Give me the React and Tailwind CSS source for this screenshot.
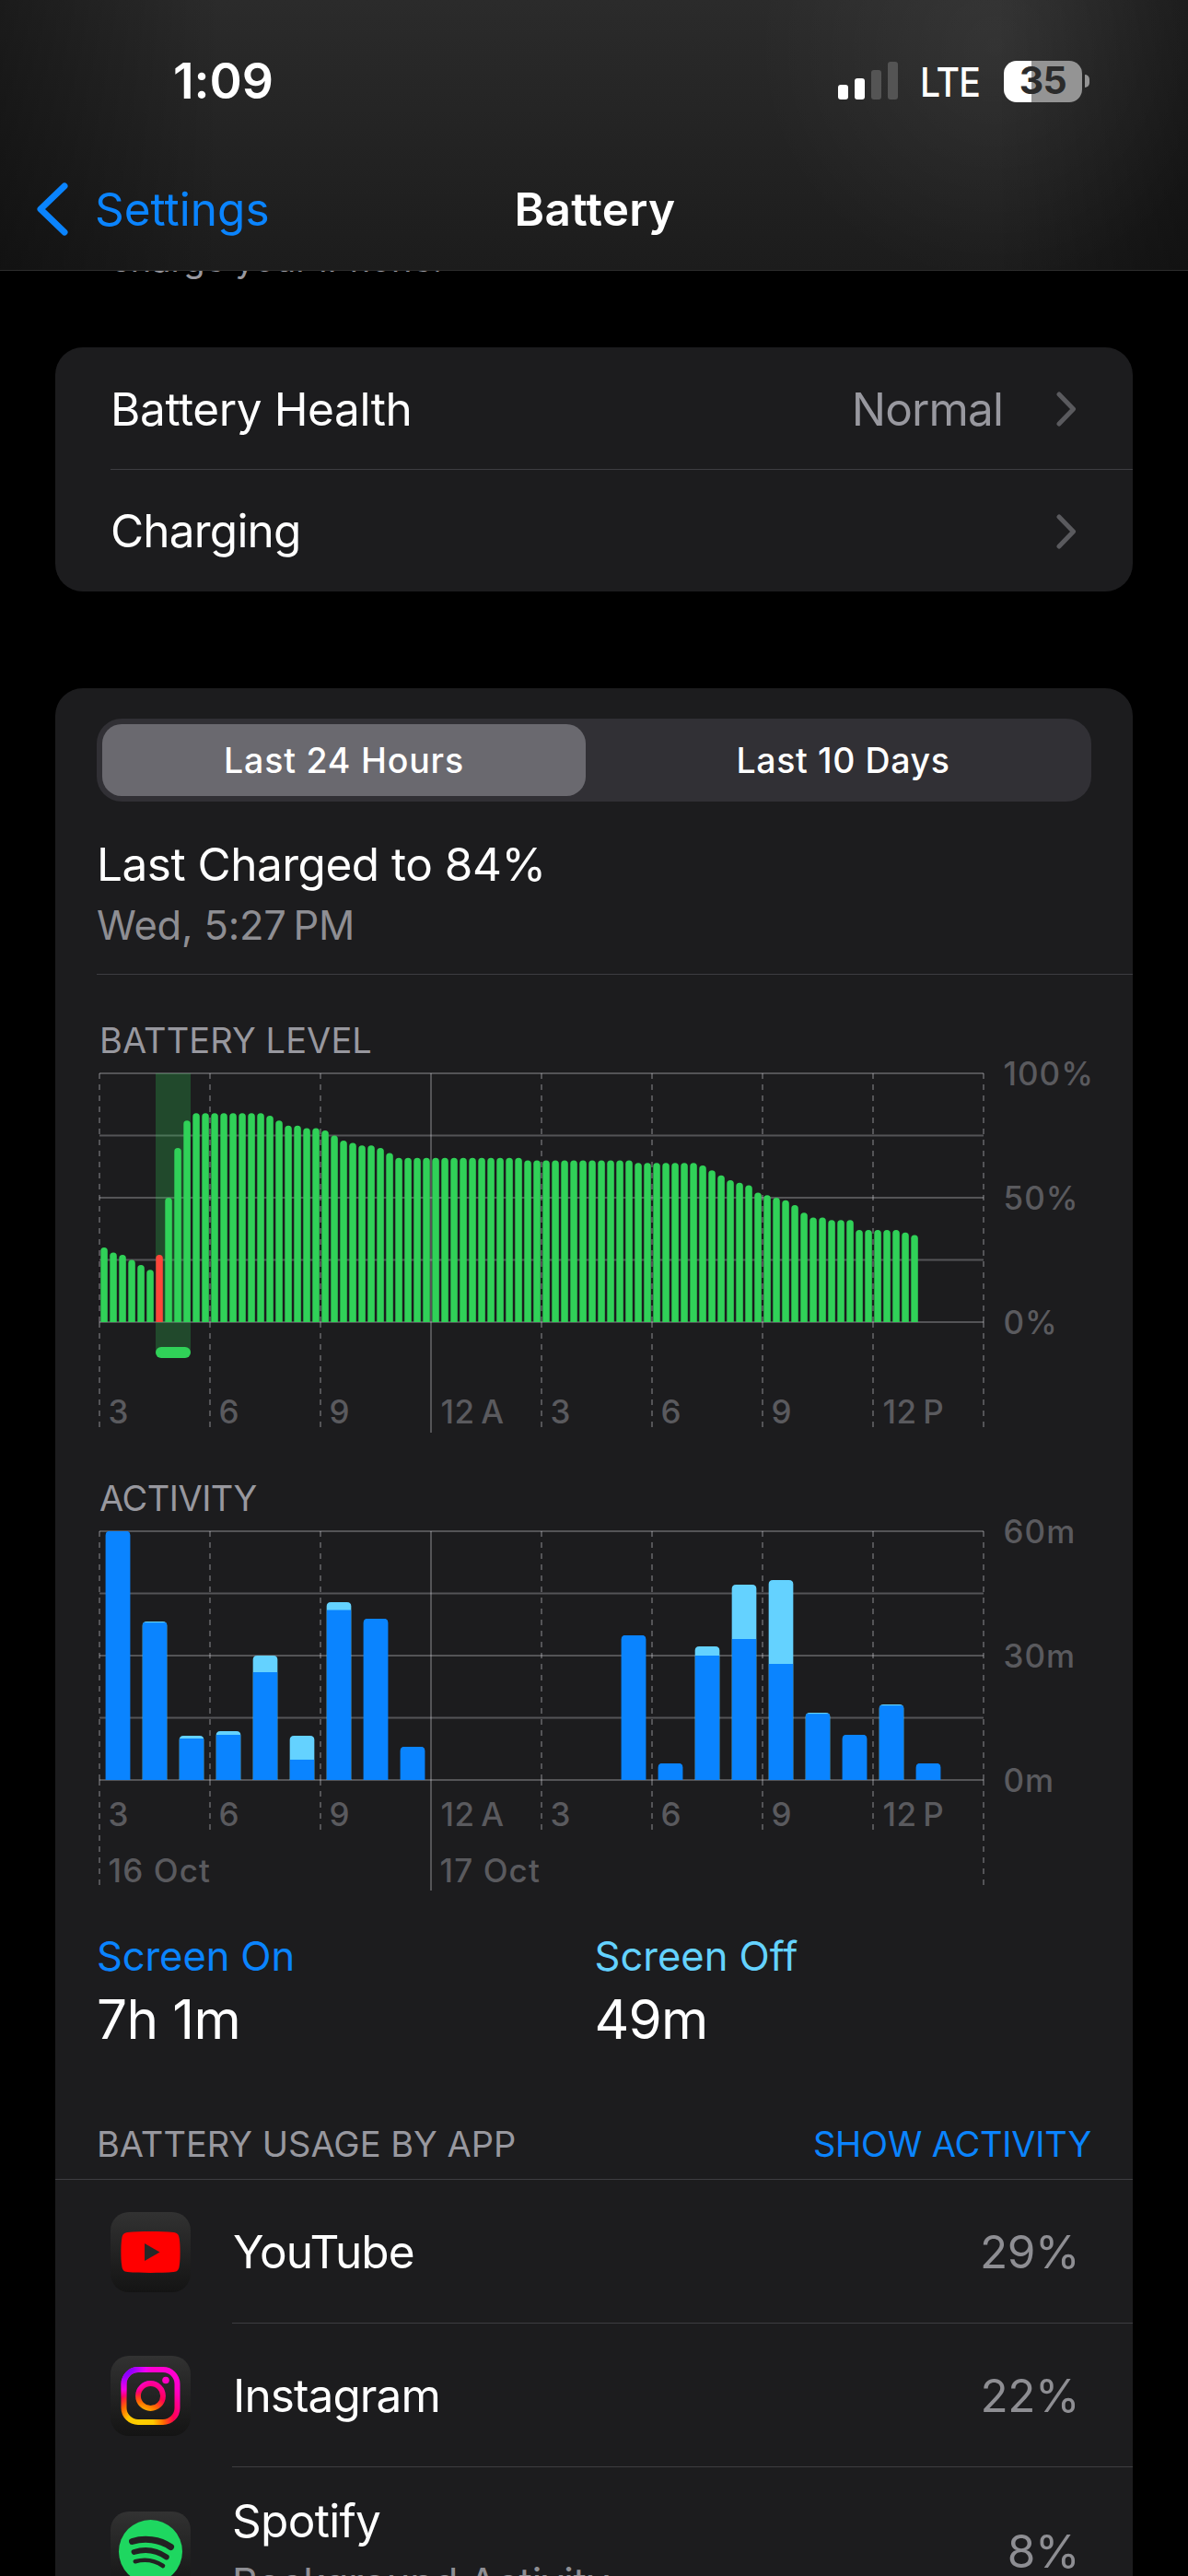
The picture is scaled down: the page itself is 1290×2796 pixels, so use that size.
import React from 'react';

// One bar per 15 minutes, starting at 3 PM
const batteryLevels = [
  30, 28, 27, 25, 23, 21, 27, 50, 70, 81,
  84, 84, 84, 84, 84, 84, 84, 84, 83, 81,
  79, 79, 78, 78, 77, 75, 73, 72, 71, 71,
  70, 68, 66, 66, 66, 66, 66, 66, 66, 66,
  66, 66, 66, 66, 66, 66, 65, 65, 65, 65,
  65, 65, 65, 65, 65, 65, 65, 65, 64, 64,
  64, 64, 64, 64, 64, 63, 61, 59, 57, 56,
  55, 52, 51, 50, 49, 47, 44, 42, 42, 41,
  41, 41, 37, 37, 37, 37, 37, 36, 35,
];
const LOW_BATTERY_INDEX = 6;

// Minutes per hour: total usage and the part with the screen on
const activity = [
  { hour: 0, total: 60, on: 60 },
  { hour: 1, total: 38.2, on: 37.97 },
  { hour: 2, total: 10.67, on: 10 },
  { hour: 3, total: 11.78, on: 10.89 },
  { hour: 4, total: 30, on: 26 },
  { hour: 5, total: 10.67, on: 4.9 },
  { hour: 6, total: 42.9, on: 41 },
  { hour: 7, total: 38.9, on: 38.9 },
  { hour: 8, total: 8, on: 8 },
  { hour: 14, total: 34.9, on: 34.9 },
  { hour: 15, total: 4, on: 4 },
  { hour: 16, total: 32.2, on: 30 },
  { hour: 17, total: 47.1, on: 34 },
  { hour: 18, total: 48.2, on: 28 },
  { hour: 19, total: 16.2, on: 15.97 },
  { hour: 20, total: 10.9, on: 10.9 },
  { hour: 21, total: 18.2, on: 17.97 },
  { hour: 22, total: 4, on: 4 },
];

const hourLabels = ['3', '6', '9', '12\u2009A', '3', '6', '9', '12\u2009P'];
const gridRows = [0, 67.5, 135, 202.5, 270];

function Chevron() {
  return (
    <svg width="22" height="38" viewBox="0 0 22 38" fill="none">
      <path d="M3 3L18.5 19L3 35" stroke="#5a5a5e" strokeWidth="5" strokeLinecap="round" strokeLinejoin="round" />
    </svg>
  );
}

function Grid({ lengths }) {
  return (
    <g stroke="#ebebf5" strokeOpacity="0.27" strokeWidth="2" fill="none">
      {gridRows.map((y) => (
        <line key={y} x1="0" x2="960" y1={y} y2={y} />
      ))}
      {/* The dash pattern restarts at the baseline */}
      {lengths.map((len, i) => (
        <path key={i} d={`M${i * 120} 0V270M${i * 120} 270V${len}`} strokeDasharray={i === 3 ? undefined : '6 6'} />
      ))}
    </g>
  );
}

function ChartLabels({ y, rows }) {
  return (
    <g fill="#5a5a5e" fontSize="35" fontWeight="500">
      {hourLabels.map((label, i) => (
        <text key={i} x={i * 120 + (label.length > 1 ? 10.5 : 9.5)} y={y} letterSpacing="0.5">{label}</text>
      ))}
      {rows.map((label, i) => (
        <text key={label} x="981.5" y={i * 135 + 13} letterSpacing="1">{label}</text>
      ))}
    </g>
  );
}

function BatteryLevelChart() {
  const lengths = [384, 384, 384, 390, 384, 384, 384, 384, 384];
  return (
    <svg className="block h-[400px] w-[1122px] overflow-visible" viewBox="0 0 1122 400">
      <Grid lengths={lengths} />
      <rect x="61" y="0" width="38" height="303" fill="#30d158" fillOpacity="0.25" />
      {batteryLevels.map((level, i) => {
        const x = i * 10 + 1.3;
        const top = 270 - level * 2.7;
        return (
          <path
            key={i}
            d={`M${x} 270V${top + 3.75}a3.75 3.75 0 0 1 7.5 0V270z`}
            fill={i === LOW_BATTERY_INDEX ? '#ff453a' : '#30d158'}
          />
        );
      })}
      <rect x="61" y="297" width="38" height="12" rx="6" fill="#30d158" />
      <ChartLabels y={380} rows={['100%', '50%', '0%']} />
    </svg>
  );
}

function ActivityChart() {
  const lengths = [384, 324, 324, 390, 324, 324, 324, 324, 384];
  return (
    <svg className="block h-[400px] w-[1122px] overflow-visible" viewBox="0 0 1122 400">
      <Grid lengths={lengths} />
      {activity.map(({ hour, total, on }) => {
        const x = hour * 40 + 6.67;
        const top = 270 - total * 4.5;
        const onTop = 270 - on * 4.5;
        const bar = `M${x} 270V${top + 4.5}q0 -4.5 4.5 -4.5h17.67q4.5 0 4.5 4.5V270z`;
        return (
          <g key={hour}>
            <clipPath id={`bar-${hour}`}>
              <path d={bar} />
            </clipPath>
            <path d={bar} fill={total > on ? '#64d2ff' : '#0a84ff'} />
            <rect x={x} y={onTop} width="26.67" height={270 - onTop} fill="#0a84ff" clipPath={`url(#bar-${hour})`} />
          </g>
        );
      })}
      <ChartLabels y={320} rows={['60m', '30m', '0m']} />
      <g fill="#5a5a5e" fontSize="35" fontWeight="500" letterSpacing="1.1">
        <text x="9.5" y="380.5">16 Oct</text>
        <text x="369.5" y="380.5">17 Oct</text>
      </g>
    </svg>
  );
}

function YouTubeLogo() {
  return (
    <svg width="87" height="87" viewBox="0 0 87 87">
      <path
        d="M43.5 21c9 0 18 .3 25 .9 4 .4 5.700 2.600 6.200 6.600.8 5 .9 10 .9 15s-.1 10-.9 15c-.5 4-2.200 6.200-6.200 6.600-7 .6-16 .9-25 .9s-18-.3-25-.9c-4-.4-5.700-2.600-6.200-6.600-.8-5-.9-10-.9-15s.1-10 .9-15c.5-4 2.200-6.200 6.200-6.600 7-.6 16-.9 25-.9z"
        fill="#ff0000"
      />
      <path d="M37 34L53.500 43.500L37 53z" fill="#282828" />
    </svg>
  );
}

function InstagramLogo() {
  return (
    <svg width="87" height="87" viewBox="0 0 87 87" fill="none">
      <defs>
        <radialGradient id="ig-warm" cx="32" cy="76" r="62" gradientUnits="userSpaceOnUse">
          <stop offset="0" stopColor="#ffd000" />
          <stop offset="0.24" stopColor="#ffc800" />
          <stop offset="0.42" stopColor="#ff6a00" />
          <stop offset="0.6" stopColor="#ff0050" />
          <stop offset="0.88" stopColor="#ff00c0" />
          <stop offset="1" stopColor="#ff00d0" />
        </radialGradient>
        <radialGradient id="ig-cool" cx="15" cy="13" r="34" gradientUnits="userSpaceOnUse">
          <stop offset="0" stopColor="#6a00ff" />
          <stop offset="0.3" stopColor="#9a00ff" />
          <stop offset="0.7" stopColor="#f000ff" stopOpacity="0.8" />
          <stop offset="1" stopColor="#ff00c0" stopOpacity="0" />
        </radialGradient>
      </defs>
      {['url(#ig-warm)', 'url(#ig-cool)'].map((paint) => (
        <g key={paint}>
          <rect x="14.500" y="15" width="58" height="57" rx="15.500" stroke={paint} strokeWidth="6" />
          <circle cx="43.500" cy="43.500" r="13.500" stroke={paint} strokeWidth="5.800" />
          <circle cx="60" cy="26.500" r="3.800" fill={paint} />
        </g>
      ))}
    </svg>
  );
}

function SpotifyLogo() {
  return (
    <svg width="87" height="87" viewBox="0 0 87 87" fill="none">
      <circle cx="43.500" cy="43.500" r="34.500" fill="#1ed760" />
      <g stroke="#222222" strokeLinecap="round">
        <path d="M23.500 32.500C37 28.500 53 30 65.500 38.500" strokeWidth="7" />
        <path d="M25.500 44C37 40.500 50 42 60.800 49.500" strokeWidth="5.800" />
        <path d="M26.800 54.200C37 51.500 47.500 52.500 57 59" strokeWidth="4.600" />
      </g>
    </svg>
  );
}

function AppIcon({ children }) {
  return (
    <div className="h-[87px] w-[87px] shrink-0 overflow-hidden rounded-[20px] bg-gradient-to-b from-[#323232] to-[#141414]">
      {children}
    </div>
  );
}

function AppRow({ icon, name, percent }) {
  return (
    <div className="flex h-[156px] items-center pl-[60px]">
      <AppIcon>{icon}</AppIcon>
      <div className="ml-[45px] flex h-full flex-1 items-center justify-between border-b border-[#3d3d41] pt-[2px] pr-[58px]">
        <span className="pl-px text-[49.5px] tracking-[-0.9px] text-white">{name}</span>
        <span className="text-[49.5px] tracking-[-0.5px] text-[#8e8e93]">{percent}</span>
      </div>
    </div>
  );
}

function StatusBar() {
  return (
    <div className="flex h-[176px] items-center justify-between pr-[107px] pl-[188px]">
      <span className="pt-[1px] text-[53.5px] font-semibold tracking-[-0.1px]">1:09</span>
      <div className="flex items-center">
        <svg width="66" height="42" viewBox="0 0 66 42">
          <rect x="0" y="25" width="11" height="16" rx="3" fill="#fff" />
          <rect x="18" y="18" width="11" height="23" rx="3" fill="#fff" />
          <rect x="36" y="9" width="11" height="32" rx="3" fill="#545454" />
          <rect x="54" y="0" width="11" height="41" rx="3" fill="#545454" />
        </svg>
        <span className="ml-[23px] w-[66px] origin-left scale-x-90 pt-[3px] text-[43.5px] font-medium tracking-[-1px]">LTE</span>
        <div className="ml-[25px] flex h-[45px] w-[85px] items-center justify-center rounded-[14px] bg-[linear-gradient(90deg,#fff_30px,#949494_30px)]">
          <span className="text-[41px] font-bold tracking-[-0.5px] text-[#2b2b2b]">35</span>
        </div>
        <div className="ml-[3px] h-[14px] w-[5px] rounded-r-full bg-[#949494]" />
      </div>
    </div>
  );
}

export default function App() {
  return (
    <div className="h-[2796px] w-[1290px] overflow-hidden bg-black font-['Inter',sans-serif] text-white">
      <header className="h-[294px] border-b border-[#2c2c2c] bg-[radial-gradient(ellipse_260px_260px_at_1080px_50px,#ffffff0d,transparent),linear-gradient(90deg,#00000060,transparent_240px,transparent_1080px,#00000060),linear-gradient(180deg,#2b2b2b,#1c1c1c)]">
        <StatusBar />
        <div className="grid h-[102px] grid-cols-3 items-center">
          <div className="flex items-center pl-[39px] text-[#0a84ff]">
            <svg width="36" height="60" viewBox="0 0 36 60" fill="none">
              <path d="M31 5L5 30L31 55" stroke="currentColor" strokeWidth="7" strokeLinecap="round" strokeLinejoin="round" />
            </svg>
            <span className="ml-[28px] text-[49.5px] tracking-[0px]">Settings</span>
          </div>
          <h1 className="pl-[2px] text-center text-[49.5px] font-semibold tracking-[0.3px]">Battery</h1>
        </div>
      </header>

      {/* Tail of the footnote that scrolls under the header */}
      <div className="flex h-[83px] items-start overflow-hidden pl-[120px]">
        <p className="-mt-[37px] text-[38px] leading-[48px] text-[#98989f]">charge your iPhone.</p>
      </div>

      <main className="px-[60px]">
        <section className="h-[265px] rounded-[30px] bg-[#1c1c1e] pl-[60px] text-[49.5px] tracking-[-0.5px]">
          <div className="flex h-[133px] items-center border-b border-[#3d3d41] pt-[2px] pr-[61px]">
            <span className="tracking-[-0.4px]">Battery Health</span>
            <span className="mr-[58px] ml-auto tracking-[-0.9px] text-[#98989f]">Normal</span>
            <Chevron />
          </div>
          <div className="flex h-[132px] items-center justify-between pt-[1px] pr-[61px]">
            <span className="tracking-[-0.8px]">Charging</span>
            <Chevron />
          </div>
        </section>

        <section className="mt-[105px] h-[2100px] rounded-t-[30px] bg-[#1c1c1e] pt-[33px]">
          <div className="mx-[45px] flex h-[90px] rounded-[27px] bg-[#313035] p-[6px] text-[37.5px]">
            <div className="flex w-[525px] items-center justify-center rounded-[21px] bg-[#6a696f] pt-[2px] font-medium tracking-[0.8px]">Last 24 Hours</div>
            <div className="flex flex-1 items-center justify-center pt-[2px] pl-[16px] font-[450] tracking-[0.6px]">Last 10 Days</div>
          </div>

          <div className="ml-[45px] h-[188px] border-b border-[#3d3d41] pt-[38px]">
            <p className="text-[49.5px] leading-[60px] tracking-[-0.5px]">Last Charged to 84%</p>
            <p className="mt-[6px] text-[43.5px] leading-[60px] tracking-[-0.2px] text-[#8e8e93]">{'Wed, 5:27\u2009PM'}</p>
          </div>

          <h2 className="mt-[51px] ml-[48px] text-[38px] leading-[40px] tracking-[0.1px] text-[#98989f]">BATTERY LEVEL</h2>
          <div className="mt-[16px] ml-[48px]">
            <BatteryLevelChart />
          </div>

          <h2 className="mt-[41px] ml-[48px] text-[38px] leading-[40px] tracking-[-0.5px] text-[#98989f]">ACTIVITY</h2>
          <div className="mt-[16px] ml-[48px]">
            <ActivityChart />
          </div>

          <div className="mt-[31px] grid grid-cols-2 pl-[45px]">
            <div>
              <p className="text-[43.5px] leading-[60px] tracking-[-0.1px] text-[#0a84ff]">Screen On</p>
              <p className="mt-[4px] text-[58.500px] leading-[70px] tracking-[-0.6px]">7h 1m</p>
            </div>
            <div className="-ml-[22px]">
              <p className="text-[43.5px] leading-[60px] text-[#64d2ff]">Screen Off</p>
              <p className="mt-[4px] text-[58.500px] leading-[70px] tracking-[-0.8px]">49m</p>
            </div>
          </div>

          <div className="mt-[80px] flex h-[59px] items-start justify-between border-b border-[#3d3d41] px-[45px] text-[38px] leading-[40px]">
            <span className="text-[#98989f]">BATTERY USAGE BY APP</span>
            <span className="tracking-[-0.2px] text-[#0a84ff]">SHOW ACTIVITY</span>
          </div>

          <AppRow icon={<YouTubeLogo />} name="YouTube" percent="29%" />
          <AppRow icon={<InstagramLogo />} name="Instagram" percent="22%" />
          <div className="flex h-[183px] items-center pl-[60px]">
            <AppIcon><SpotifyLogo /></AppIcon>
            <div className="ml-[45px] flex flex-1 items-center justify-between pr-[58px]">
              <div>
                <p className="text-[49.5px] leading-[66px] tracking-[-0.7px]">Spotify</p>
                <p className="text-[43.5px] leading-[68px] tracking-[-0.2px] text-[#8e8e93]">Background Activity</p>
              </div>
              <span className="text-[49.5px] tracking-[-0.5px] text-[#8e8e93]">8%</span>
            </div>
          </div>
        </section>
      </main>
    </div>
  );
}
